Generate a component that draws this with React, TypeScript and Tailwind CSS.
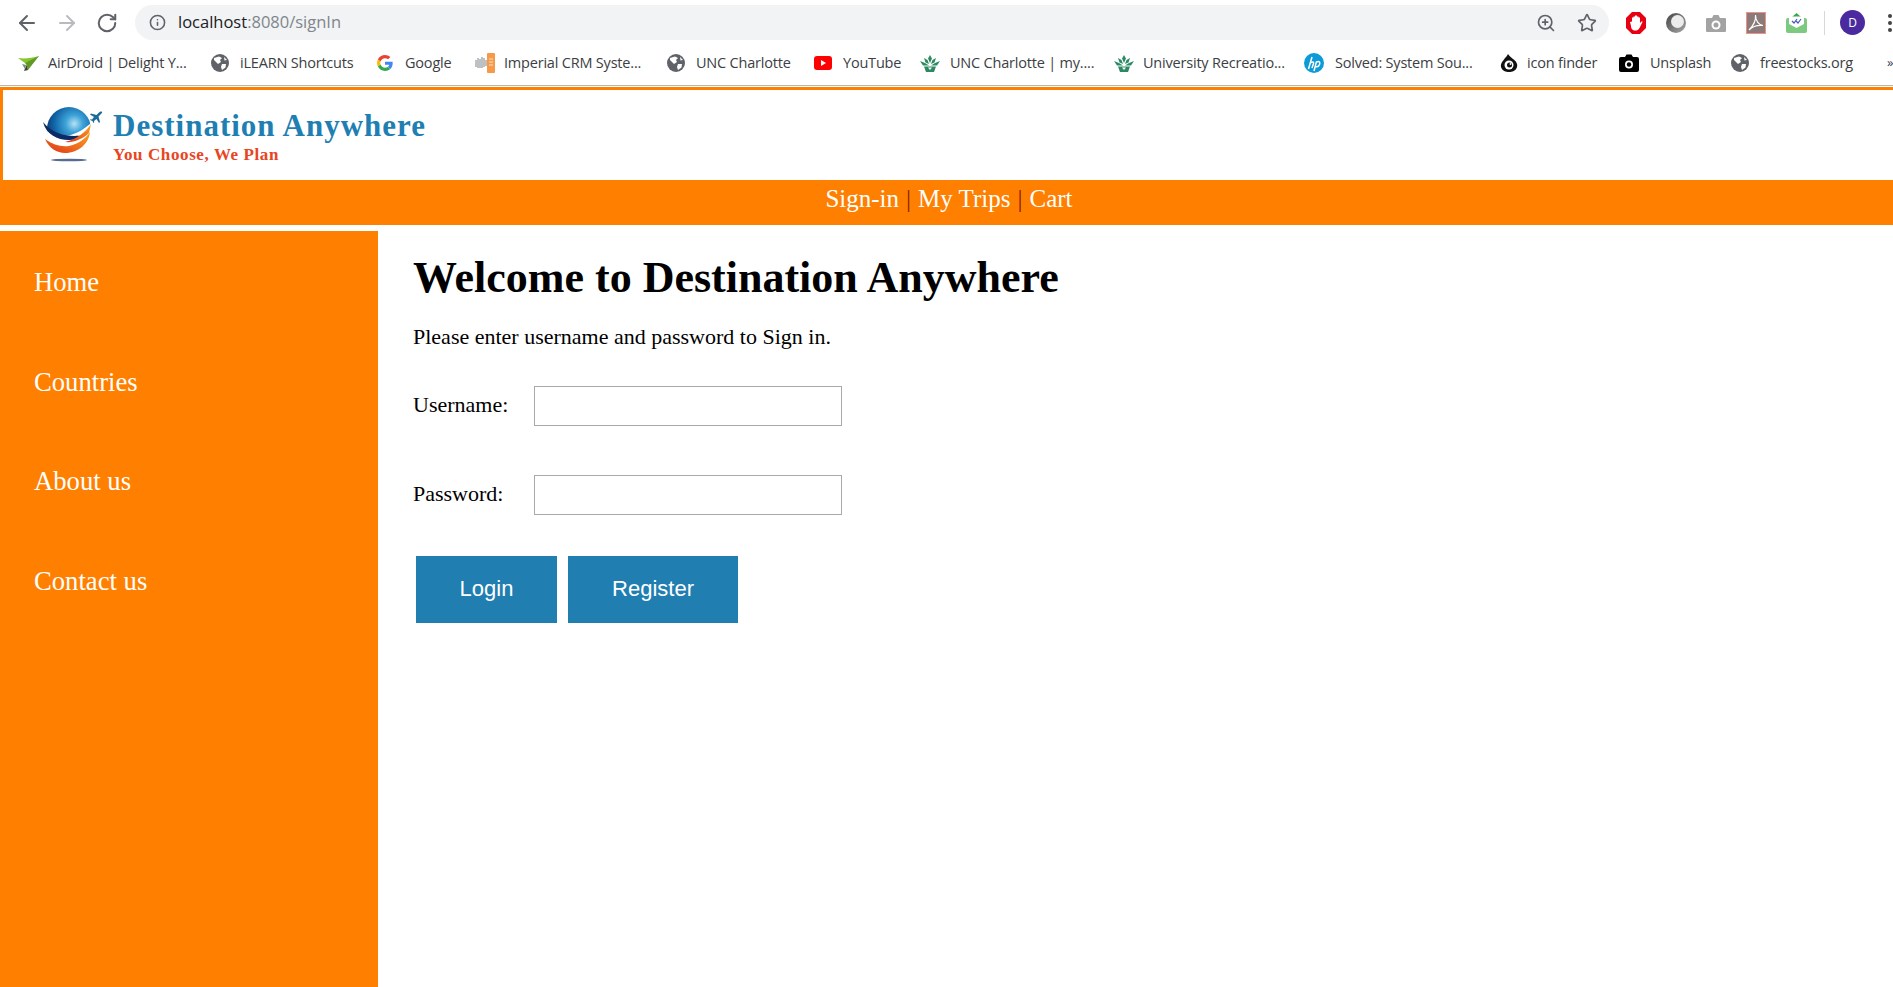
import { ArrowLeft, ArrowRight, RotateCw, Info, ZoomIn, Star } from "lucide-react";

const Globe = () => (
  <svg width="18" height="18" viewBox="0 0 18 18">
    <circle cx="9" cy="9" r="9" fill="#5f6368" />
    <path d="M3 4 L8 2.500 L11 4 L9 6 L10 8 L7 10 L5 8 L3 6 Z" fill="#fff" />
    <path d="M11 10 L15 10 L14.500 13.500 L11 16 L10 13 Z" fill="#fff" />
    <path d="M13 3 L16 6 L13.500 6.500 Z" fill="#fff" />
  </svg>
);
const AirDroid = () => (
  <svg width="21" height="15" viewBox="0 0 21 15">
    <path d="M0 2 C7 3 14 2 21 0 L14 6 L7 7 Z" fill="#84c62c" />
    <path d="M7 7 L21 0 L10 14 L8.500 9 Z" fill="#5f9a26" />
    <path d="M8.500 9 L10 14 L6 15 Z" fill="#3a3f35" />
    <path d="M4 8 L8 9 L7 13 Z" fill="#7a8a70" />
  </svg>
);
const GoogleG = () => (
  <svg width="16" height="16" viewBox="0 0 48 48">
    <path fill="#EA4335" d="M24 9.500c3.500 0 6.700 1.200 9.200 3.600l6.900-6.900C35.900 2.400 30.500 0 24 0 14.600 0 6.500 5.400 2.600 13.200l8 6.200C12.500 13.700 17.800 9.500 24 9.500z" />
    <path fill="#4285F4" d="M47 24.500c0-1.600-.1-3.100-.4-4.500H24v9h12.900c-.6 3-2.200 5.500-4.700 7.200l7.700 6c4.500-4.200 7.100-10.300 7.100-17.700z" />
    <path fill="#FBBC05" d="M10.600 28.600c-.5-1.400-.8-3-.8-4.600s.3-3.200.8-4.600l-8-6.200C.9 16.500 0 20.100 0 24s.9 7.500 2.600 10.800l8-6.200z" />
    <path fill="#34A853" d="M24 48c6.500 0 11.900-2.100 15.900-5.800l-7.700-6c-2.200 1.400-4.900 2.300-8.200 2.300-6.200 0-11.500-4.200-13.400-9.900l-8 6.200C6.500 42.600 14.600 48 24 48z" />
  </svg>
);
const Imperial = () => (
  <svg width="21" height="22" viewBox="0 0 21 22">
    <rect x="12" y="1" width="8" height="20" rx="1" fill="#f59a48" />
    <path d="M1 8 v7 M3 6 v10 M5 7 v9 M7 5 v11 M9 6 v9 M11 8 v6" stroke="#a8acb0" strokeWidth="1.500" />
    <path d="M14 7 h4 M14 10 h4 M14 13 h4" stroke="#fde0c4" strokeWidth="1" />
  </svg>
);
const YouTube = () => (
  <svg width="18" height="14" viewBox="0 0 18 14">
    <rect width="18" height="14" rx="3" fill="#f00" />
    <path d="M7 4 L12 7 L7 10 Z" fill="#fff" />
  </svg>
);
const Crown = () => (
  <svg width="20" height="17" viewBox="0 0 20 17" fill="#2c8a63">
    <path d="M10 0 L12 3.500 L10 8 L8 3.500 Z" />
    <path d="M4 3 L7.500 5 L9 9 L5.500 7.500 Z" />
    <path d="M16 3 L12.500 5 L11 9 L14.500 7.500 Z" />
    <path d="M0 6 L5 8 L9 10.500 L3 10.500 Z" />
    <path d="M20 6 L15 8 L11 10.500 L17 10.500 Z" />
    <path d="M4 11.500 L16 11.500 L14 17 L6 17 Z" />
    <path d="M8 12.500 L10 15 L12 12.500 Z" fill="#fff" />
  </svg>
);
const Hp = () => (
  <svg width="20" height="20" viewBox="0 0 20 20">
    <circle cx="10" cy="10" r="10" fill="#0d9bd8" />
    <path d="M8 4 L4.500 16 M6 10.500 C8 8.500 10 8.500 9.500 10.500 L8 15 M12.500 8.500 L10 18 M12.500 9 C15 7.800 16.500 9 15.500 11.500 C14.800 13.500 13 14 11.500 13.500" fill="none" stroke="#fff" strokeWidth="1.500" />
  </svg>
);
const IconFinder = () => (
  <svg width="18" height="20" viewBox="0 0 18 20">
    <path d="M8 1 C9 3 11 4 13 6 C16 8 18 11 17 14 C16 18 12 19 9 19 C6 19 2 18 1 14 C0 10 4 7 5 5 C6 4 7 3 8 1 Z" fill="#111" />
    <circle cx="9" cy="12" r="4.500" fill="#fff" />
    <circle cx="9.500" cy="12" r="2.500" fill="#111" />
    <circle cx="10.500" cy="11" r="0.900" fill="#fff" />
  </svg>
);
const Unsplash = () => (
  <svg width="20" height="18" viewBox="0 0 20 18">
    <path d="M2 3 H6 L7.500 0.500 H12.500 L14 3 H18 Q20 3 20 5 V16 Q20 18 18 18 H2 Q0 18 0 16 V5 Q0 3 2 3 Z" fill="#000" />
    <circle cx="10" cy="10.500" r="4" fill="#fff" />
    <circle cx="10" cy="10.500" r="2.200" fill="#000" />
  </svg>
);

const bookmarks = [
  { w: "w-[193px]", gap: "w-[30px]", icon: <AirDroid />, label: "AirDroid | Delight Y..." },
  { w: "w-[166px]", gap: "w-[29px]", icon: <Globe />, label: "iLEARN Shortcuts" },
  { w: "w-[98px]", gap: "w-[28px]", icon: <GoogleG />, label: "Google" },
  { w: "w-[192px]", gap: "w-[29px]", icon: <Imperial />, label: "Imperial CRM Syste..." },
  { w: "w-[147px]", gap: "w-[29px]", icon: <Globe />, label: "UNC Charlotte" },
  { w: "w-[106px]", gap: "w-[29px]", icon: <YouTube />, label: "YouTube" },
  { w: "w-[194px]", gap: "w-[30px]", icon: <Crown />, label: "UNC Charlotte | my...." },
  { w: "w-[190px]", gap: "w-[29px]", icon: <Crown />, label: "University Recreatio..." },
  { w: "w-[196px]", gap: "w-[31px]", icon: <Hp />, label: "Solved: System Sou..." },
  { w: "w-[119px]", gap: "w-[27px]", icon: <IconFinder />, label: "icon finder" },
  { w: "w-[112px]", gap: "w-[31px]", icon: <Unsplash />, label: "Unsplash" },
  { w: "w-[156px]", gap: "w-[29px]", icon: <Globe />, label: "freestocks.org" },
];

const Logo = () => (
  <svg width="60" height="56" viewBox="0 0 60 56">
    <defs>
      <radialGradient id="ball" cx="62%" cy="38%" r="65%">
        <stop offset="0%" stopColor="#b5e2f5" />
        <stop offset="30%" stopColor="#3ea3d8" />
        <stop offset="70%" stopColor="#1166a8" />
        <stop offset="100%" stopColor="#0a3a78" />
      </radialGradient>
      <linearGradient id="sw" x1="1" y1="0" x2="0" y2="1">
        <stop offset="0%" stopColor="#f8a521" />
        <stop offset="55%" stopColor="#ee6a1d" />
        <stop offset="100%" stopColor="#dc2f1c" />
      </linearGradient>
    </defs>
    <circle cx="26" cy="22" r="22" fill="url(#ball)" />
    <path d="M0 20 C10 32 30 34 50 14 L60 14 L60 50 L0 50 Z" fill="#fff" />
    <path d="M0 15 C3 27 14 33 26 33 C32 33 38 31 42 28 C30 30 12 30 0 15 Z" fill="#0c2a66" />
    <path d="M48 17 C42 26 34 32 22 35 C30 36 40 32 46 26 Z" fill="url(#sw)" />
    <path d="M47 25 C46 36 36 46 22 46 C14 46 6 41 2 32 C10 38 18 40 26 39 C36 37 43 31 47 25 Z" fill="url(#sw)" />
    <ellipse cx="26" cy="53" rx="18" ry="1.300" fill="#5a6b92" />
    <path d="M59 5 C58 4 56.500 5 55.500 6 L53.500 8 L48 6.500 L47 7.500 L51 10 L49 12.500 L47.500 12.200 L47 13 L49.500 14 L50.500 16 L51.200 15.500 L51 14 L53.500 12 L56 16 L57 15 L55.500 9.500 L58 7 C59 6 59.500 5.500 59 5 Z" fill="#1a6a9c" />
  </svg>
);

const serif = "font-['Liberation_Serif','Times_New_Roman',serif]";

export default function App() {
  return (
    <div className={`w-[1893px] h-[987px] overflow-hidden bg-white flex flex-col ${serif}`}>
      {/* Browser toolbar */}
      <div className="h-[45px] shrink-0 flex items-start text-[#5f6368] font-['Open_Sans','Noto_Sans',sans-serif]">
        <div className="w-[135px] h-[45px] pl-[15px] flex items-center">
          <ArrowLeft size={24} strokeWidth={2} className="mr-[16px]" />
          <ArrowRight size={24} strokeWidth={2} className="mr-[17px] text-[#b9bbbe]" />
          <RotateCw size={22} strokeWidth={2.200} />
        </div>
        <div className="mt-[5px] w-[1474px] h-[35px] rounded-full bg-[#f1f3f4] flex items-center pl-[14px] pr-[12px]">
          <Info size={17} strokeWidth={2.200} />
          <span className="ml-[12px] text-[16.500px] leading-none text-[#202124]">
            localhost<span className="text-[#80868b]">:8080/signIn</span>
          </span>
          <ZoomIn size={20} strokeWidth={2} className="ml-auto" />
          <Star size={20} strokeWidth={2} className="ml-[21px]" />
        </div>
        <div className="h-[45px] flex items-center pl-[17px]">
          <svg width="20" height="22" viewBox="0 0 20 22" className="mr-[20px]">
            <path d="M6 0 H14 L20 6 V16 L14 22 H6 L0 16 V6 Z" fill="#e60012" />
            <path d="M4 10 L6 9.500 V5.500 L7.500 5.500 V4.500 L9 4.500 V3.500 L11 3.500 V4.500 L12.500 4.500 V5.500 L14 5.500 V11 L16 9 L16.500 10 L13.500 16 C12.500 18 11 18.500 9 18.500 C6 18.500 5 16 5 14 Z" fill="#fff" />
          </svg>
          <svg width="20" height="20" viewBox="0 0 20 20" className="mr-[20px]">
            <defs>
              <linearGradient id="ghost" x1="0" y1="0" x2="1" y2="1">
                <stop offset="0%" stopColor="#444" />
                <stop offset="100%" stopColor="#a8a8a8" />
              </linearGradient>
            </defs>
            <circle cx="10" cy="10" r="10" fill="url(#ghost)" />
            <circle cx="11.500" cy="8.500" r="6.500" fill="#ececec" />
          </svg>
          <svg width="20" height="18" viewBox="0 0 20 18" className="mr-[20px]">
            <path d="M1 4 H6 L7.500 1 H12.500 L14 4 H19 Q20 4 20 5 V17 Q20 18 19 18 H1 Q0 18 0 17 V5 Q0 4 1 4 Z" fill="#a3a3a3" />
            <circle cx="10" cy="11" r="4.500" fill="#fff" />
            <circle cx="10" cy="11" r="2.500" fill="#a3a3a3" />
          </svg>
          <svg width="20" height="22" viewBox="0 0 20 22" className="mr-[20px]">
            <rect x="0.500" y="0.500" width="19" height="21" fill="#8a7a78" stroke="#f0908a" />
            <path d="M3 18 C7 14 10 8 9.500 3 C9.500 9 13 13 17 13.500 C12 13 7 14 3 18 Z" fill="none" stroke="#fff" strokeWidth="1.200" />
          </svg>
          <svg width="21" height="20" viewBox="0 0 21 20" className="mr-[17px]">
            <path d="M10.500 0 L15 4 H6 Z" fill="#35a853" />
            <rect y="5" width="21" height="15" rx="2" fill="#7dc97f" />
            <path d="M3 3.500 H18 V11 L10.500 15 L3 11 Z" fill="#fff" />
            <path d="M6 8 L8 10 L11 6 M10 8 L12 10 L15 6" fill="none" stroke="#4a55c8" strokeWidth="1.200" />
          </svg>
          <div className="w-px h-[24px] bg-[#d8d8d8] mr-[15px]" />
          <div className="w-[25px] h-[25px] rounded-full bg-[#4b2aa0] text-white text-[12px] flex items-center justify-center mr-[23px]">D</div>
          <div className="flex flex-col gap-[3px]">
            <div className="w-[4px] h-[4px] rounded-full bg-[#444]" />
            <div className="w-[4px] h-[4px] rounded-full bg-[#444]" />
            <div className="w-[4px] h-[4px] rounded-full bg-[#444]" />
          </div>
        </div>
      </div>

      {/* Bookmarks bar */}
      <div className="h-[40px] shrink-0 flex items-center pl-[18px] pb-[4px] text-[14.500px] tracking-[-0.200px] text-[#3c4043] whitespace-nowrap font-['Open_Sans','Noto_Sans',sans-serif]">
        {bookmarks.map((b) => (
          <div key={b.label} className={`${b.w} shrink-0 flex items-center`}>
            <div className={`${b.gap} shrink-0 flex items-center`}>{b.icon}</div>
            <span>{b.label}</span>
          </div>
        ))}
        <span className="text-[13px]">»</span>
      </div>
      <div className="h-[1px] shrink-0 bg-[#b5b5b5]" />
      <div className="h-[1px] shrink-0 bg-white" />

      {/* Site header */}
      <div className="h-[93px] shrink-0 border-t-[3px] border-l-[3px] border-[#ff8000] flex items-start pl-[40px] pt-[17px]">
        <Logo />
        <div className="ml-[10px] pt-[2px] flex flex-col font-bold">
          <div className="text-[31px] leading-[34px] tracking-[1px] text-[#1f7fb3]">Destination Anywhere</div>
          <div className="mt-[2px] text-[17px] leading-[20px] tracking-[0.600px] text-[#e8451f]">You Choose, We Plan</div>
        </div>
      </div>

      {/* Top nav */}
      <div className="h-[45px] shrink-0 bg-[#ff8000] pl-[5px] flex justify-center text-[25px] leading-[38px] text-white">
        <span>Sign-in</span>
        <span className="mx-[7px] text-[#8c1c00]">|</span>
        <span>My Trips</span>
        <span className="mx-[7px] text-[#8c1c00]">|</span>
        <span>Cart</span>
      </div>

      {/* Body */}
      <div className="flex-1 mt-[6px] flex min-h-0">
        <aside className="w-[378px] shrink-0 bg-[#ff8000] pl-[34px] pt-[36px] flex flex-col gap-[69.700px] text-[26.670px] leading-[40px] text-white">
          <div className="h-[30px] flex items-center">Home</div>
          <div className="h-[30px] flex items-center">Countries</div>
          <div className="h-[30px] flex items-center">About us</div>
          <div className="h-[30px] flex items-center">Contact us</div>
        </aside>
        <main className="flex-1 pl-[35px] text-black">
          <h1 className="mt-[21px] text-[44px] leading-[52px] font-bold">Welcome to Destination Anywhere</h1>
          <p className="mt-[19px] text-[22px] leading-[28px]">Please enter username and password to Sign in.</p>
          <div className="mt-[35px] flex flex-col gap-[49px] text-[22px]">
            <label className="flex items-center">
              <span className="w-[121px] pb-[3px]">Username:</span>
              <input className="w-[308px] h-[40px] bg-white border border-[#a9a9a9] outline-none" />
            </label>
            <label className="flex items-center">
              <span className="w-[121px] pb-[3px]">Password:</span>
              <input type="password" className="w-[308px] h-[40px] bg-white border border-[#a9a9a9] outline-none" />
            </label>
          </div>
          <div className="mt-[41px] ml-[3px] flex gap-[11px] text-[22px] text-white font-['Liberation_Sans',Arial,sans-serif]">
            <button className="w-[141px] h-[67px] pb-[2px] bg-[#207eb0]">Login</button>
            <button className="w-[170px] h-[67px] pb-[2px] bg-[#207eb0]">Register</button>
          </div>
        </main>
      </div>
    </div>
  );
}
